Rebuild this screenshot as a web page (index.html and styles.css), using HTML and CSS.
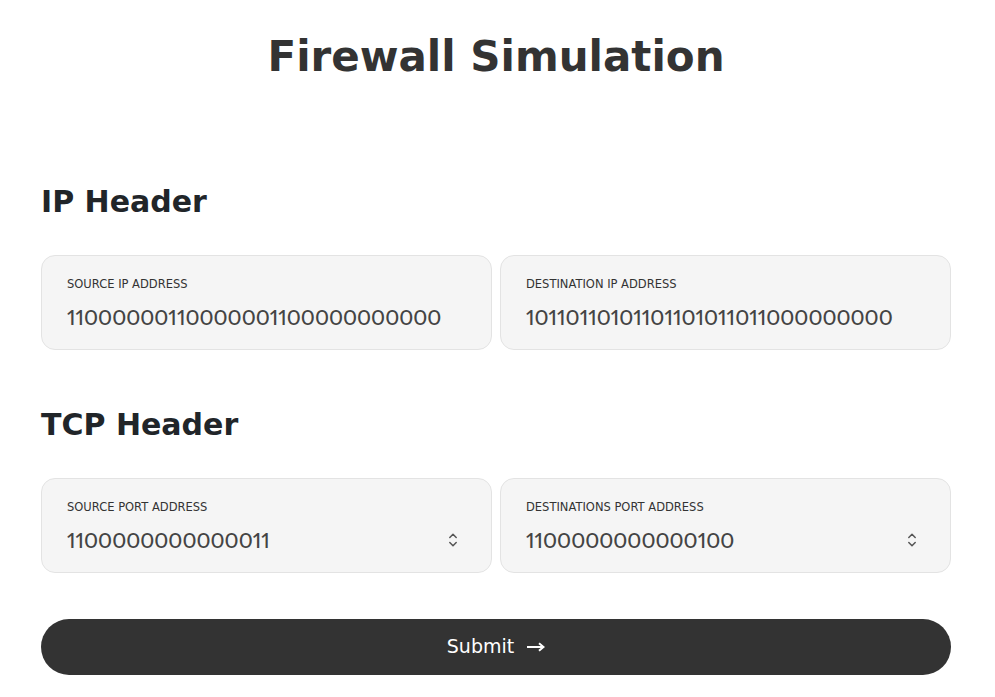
FILE: index.html
```html
<!DOCTYPE html>
<html lang="en">
<head>
<meta charset="utf-8">
<title>Firewall Simulation</title>
<link rel="stylesheet" href="styles.css">
</head>
<body>
<main class="page">
  <h1 class="title">Firewall Simulation</h1>

  <section class="group">
    <h2 class="group-title">IP Header</h2>
    <div class="fields">
      <label class="field">
        <span class="field-label">Source IP Address</span>
        <span class="field-row"><input class="field-input" type="text" value="11000000110000001100000000000"></span>
      </label>
      <label class="field">
        <span class="field-label">Destination IP Address</span>
        <span class="field-row"><input class="field-input" type="text" value="10110110101101101011011000000000"></span>
      </label>
    </div>
  </section>

  <section class="group">
    <h2 class="group-title">TCP Header</h2>
    <div class="fields">
      <label class="field">
        <span class="field-label">Source Port Address</span>
        <span class="field-row"><input class="field-input" type="text" value="1100000000000011">
          <svg class="spinner" width="10" height="16" viewBox="0 0 10 16"><path d="M1.8 5.5 L5 2.3 L8.2 5.5 M1.8 10.5 L5 13.7 L8.2 10.5" fill="none" stroke="#555" stroke-width="1.5" stroke-linecap="round" stroke-linejoin="round"/></svg>
        </span>
      </label>
      <label class="field">
        <span class="field-label">Destinations Port Address</span>
        <span class="field-row"><input class="field-input" type="text" value="1100000000000100">
          <svg class="spinner" width="10" height="16" viewBox="0 0 10 16"><path d="M1.8 5.5 L5 2.3 L8.2 5.5 M1.8 10.5 L5 13.7 L8.2 10.5" fill="none" stroke="#555" stroke-width="1.5" stroke-linecap="round" stroke-linejoin="round"/></svg>
        </span>
      </label>
    </div>
  </section>

  <button class="submit" type="button">Submit
    <svg class="arrow" width="18" height="10" viewBox="0 0 18 10"><path d="M0 5 H16 M12 1.2 L16.5 5 L12 8.8" fill="none" stroke="#fff" stroke-width="2" stroke-linejoin="miter"/></svg>
  </button>
</main>
</body>
</html>
```

FILE: styles.css
```css
* { box-sizing: border-box; }
body {
  margin: 0;
  background: #fff;
  font-family: "DejaVu Sans", "Noto Sans", sans-serif;
  color: #333;
}
.page {
  width: 910px;
  margin: 0 44px 0 41px;
  padding-top: 29px;
}
.title {
  margin: 0;
  text-align: center;
  font-size: 42px;
  line-height: 56px;
  font-weight: 800;
  color: #333;
}
.group-title {
  margin: 97px 0 0 0;
  font-size: 30px;
  line-height: 40px;
  font-weight: 800;
  color: #212529;
}
.group + .group .group-title { margin-top: 55px; }
.fields {
  display: grid;
  grid-template-columns: 1fr 1fr;
  gap: 8px;
  margin-top: 33px;
}
.field {
  display: flex;
  flex-direction: column;
  height: 95px;
  padding: 21px 25px 0 25px;
  background: #f5f5f5;
  border: 1px solid #e3e3e3;
  border-radius: 14px;
}
.field-label {
  font-size: 11.5px;
  line-height: 14px;
  text-transform: uppercase;
  color: #333;
}
.field-row {
  display: flex;
  align-items: center;
  margin-top: 13px;
}
.field-input {
  flex: 1;
  min-width: 0;
  border: 0;
  padding: 0;
  background: transparent;
  font-family: "Lato", "DejaVu Sans", sans-serif;
  font-variant-numeric: proportional-nums;
  font-size: 21.3px;
  font-weight: 500;
  line-height: 26px;
  color: #444;
  outline: none;
}
.spinner { margin-right: 8px; }
.submit {
  display: flex;
  align-items: center;
  justify-content: center;
  gap: 13px;
  width: 100%;
  height: 56px;
  margin-top: 46px;
  padding: 0 0 3px 0;
  border: 0;
  border-radius: 28px;
  background: #333;
  color: #fff;
  font-family: inherit;
  font-size: 19px;
}
.arrow { display: block; margin-top: 2px; }
```
